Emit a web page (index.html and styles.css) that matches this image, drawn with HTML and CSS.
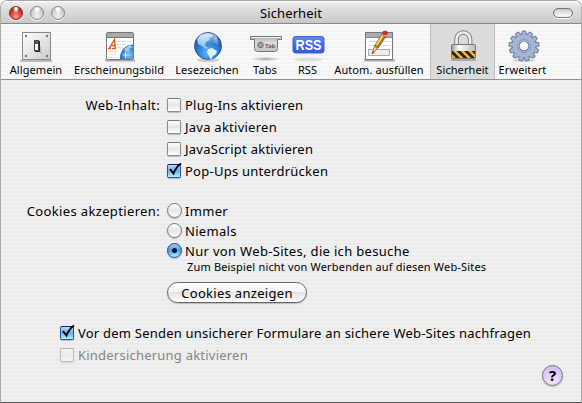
FILE: index.html
```
<!DOCTYPE html>
<html lang="de">
<head>
<meta charset="utf-8">
<title>Sicherheit</title>
<link rel="stylesheet" href="styles.css">
</head>
<body>
<div class="window">
  <header class="titlebar">
    <div class="lights"><i class="light red"></i><i class="light"></i><i class="light"></i></div>
    <h1>Sicherheit</h1>
    <i class="pill"></i>
  </header>
  <nav class="toolbar">
    <div class="item"><svg width="34" height="34" viewBox="0 0 34 34">
      <defs><linearGradient id="plate" x2="1" y2="1"><stop stop-color="#fff"/><stop offset="1" stop-color="#ccc"/></linearGradient></defs>
      <path d="M1 32h32" stroke="#bbb" stroke-width="2"/><rect x="3.500" y="3.500" width="28" height="27" fill="url(#plate)" stroke="#888"/>
      <g fill="#777"><circle cx="7" cy="7" r="1.200"/><circle cx="28" cy="7" r="1.200"/><circle cx="7" cy="27" r="1.200"/><circle cx="28" cy="27" r="1.200"/></g>
      <path d="M17 21l6 4-1-8z" fill="#bbb"/><rect x="15.500" y="11.500" width="4" height="10" fill="#fff" stroke="#444"/><path d="M16 12h3v3h-3z" fill="#555"/><path d="M16 22.500h4.500V12" stroke="#222" fill="none"/></svg><span>Allgemein</span></div>
    <div class="item wide"><svg width="34" height="34" viewBox="0 0 34 34">
      <defs><clipPath id="page"><path d="M5 9h26v21H5z"/></clipPath><radialGradient id="disc" cx=".35" cy=".4"><stop stop-color="#7fc6f5"/><stop offset=".6" stop-color="#3579c9"/><stop offset="1" stop-color="#164890"/></radialGradient></defs>
      <path d="M3 31.500h30" stroke="#aaa" stroke-width="2"/><rect x="4.500" y="3.500" width="27" height="27" rx="1.500" fill="#fff" stroke="#777"/><path d="M5 4h26v4H5z" fill="#aaa"/><path d="M5 8.500h26" stroke="#777"/>
      <path d="M15 12.500h14M15 15.500h11M15 18.500h6M7 22.500h8M7 25.500h7M7 28.500h7" stroke="#ddd" stroke-dasharray="4 1"/>
      <path d="M6 19.500h3M10 19.500h4M7.500 19l5-8.500.8 9M9 16.500h4" stroke="#e35a1c" stroke-width="1.400" fill="none"/>
      <g clip-path="url(#page)"><circle cx="31" cy="28.500" r="13" fill="url(#disc)"/><path d="M22 20l6-4 3 2-4 2 1 2-4 1z" fill="#a5c9f1"/><path d="M23.500 23v6M20.500 26h6" stroke="#eaffff" stroke-width=".8"/></g></svg><span>Erscheinungsbild</span></div>
    <div class="item"><svg width="34" height="34" viewBox="0 0 34 34">
      <defs><radialGradient id="globe" cx=".5" cy=".75" r=".7"><stop stop-color="#63bdf8"/><stop offset=".55" stop-color="#2b7bd5"/><stop offset="1" stop-color="#234d9f"/></radialGradient><linearGradient id="shine" x2="0" y2="1"><stop stop-color="#fff" stop-opacity=".65"/><stop offset="1" stop-color="#fff" stop-opacity="0"/></linearGradient></defs>
      <ellipse cx="18" cy="31" rx="11" ry="2" fill="#ccc"/><circle cx="18" cy="17" r="13.500" fill="url(#globe)" stroke="#244585" stroke-width=".8"/>
      <path d="M7 10l4-4 7-2 5 2-1 3-3-1 1 3-4 2-1 4 3 2-2 1-4-3-4-2z" fill="#98c7f1"/><path d="M18 20l4-1 5 3-1 3-3 2-2 4-2-4-2-4z" fill="#dcf3ff"/><path d="M25 7l4 5-1 4-3-2-2-4z" fill="#5792d5"/><ellipse cx="18" cy="10" rx="10" ry="6" fill="url(#shine)"/></svg><span>Lesezeichen</span></div>
    <div class="item"><svg width="34" height="34" viewBox="0 0 34 34">
      <defs><linearGradient id="tabg" x2="0" y2="1"><stop stop-color="#aaa"/><stop offset=".4" stop-color="#ddd"/><stop offset="1" stop-color="#c4c4c4"/></linearGradient><radialGradient id="tabshade"><stop stop-color="#aaa"/><stop offset="1" stop-color="#aaa" stop-opacity="0"/></radialGradient></defs>
      <ellipse cx="17.500" cy="30" rx="15" ry="2.500" fill="url(#tabshade)"/>
      <path d="M2.500 7.500h31v3h-4v9q0 3-3 3h-17q-3 0-3-3v-9h-4z" fill="url(#tabg)" stroke="#777"/><path d="M3 8.500h30" stroke="#eee"/><circle cx="12.500" cy="16" r="3.200" fill="#777"/><path d="M10.500 14l4 4m0-4l-4 4" stroke="#ccc"/><text x="17" y="18.500" class="tabtext">Tab</text></svg><span>Tabs</span></div>
    <div class="item"><svg width="34" height="34" viewBox="0 0 34 34">
      <defs><linearGradient id="rssg" x2="0" y2="1"><stop stop-color="#6a8cf5"/><stop offset=".5" stop-color="#4169ec"/><stop offset="1" stop-color="#315bdd"/></linearGradient></defs>
      <ellipse cx="17.500" cy="30.500" rx="14" ry="2" fill="#ddd"/><rect x="2" y="7.500" width="31" height="16.500" rx="2.500" fill="url(#rssg)" stroke="#3c5ed0"/><text x="17.500" y="21" text-anchor="middle" textLength="26" lengthAdjust="spacingAndGlyphs" class="rsstext">RSS</text></svg><span>RSS</span></div>
    <div class="item"><svg width="34" height="34" viewBox="0 0 34 34">
      <path d="M2 31.500h31" stroke="#aaa" stroke-width="2"/><rect x="3.500" y="3.500" width="27" height="27" fill="#fff" stroke="#777"/><path d="M4 4h26v4H4z" fill="#aaa"/><path d="M4 8.500h26" stroke="#888"/><path d="M7 12.500h9M7 16.500h7M20 12.500h8M20 16.500h8" stroke="#ddd"/><path d="M6.500 20.500h21v6h-21z" fill="#eee" stroke="#aaa"/>
      <path d="M10 25l3-9 7-11 4 2-7 11z" fill="#b77a29" stroke="#6b4820" stroke-width=".7"/><path d="M14.500 16l6.500-10" stroke="#ffd95d" stroke-width="2"/><path d="M19.500 5.500l4 2 1-2-4-2z" fill="#ddd" stroke="#777" stroke-width=".5"/><ellipse cx="23" cy="4" rx="2.800" ry="2.200" fill="#c82c20"/><path d="M10 25l2.600-7 2.400 1.500z" fill="#efcf9c"/><path d="M10 25l1-3 1 1z" fill="#222"/></svg><span>Autom. ausfüllen</span></div>
    <div class="item selected"><svg width="34" height="34" viewBox="0 0 34 34">
      <defs><linearGradient id="steel" x2="1"><stop stop-color="#999"/><stop offset=".3" stop-color="#fff"/><stop offset="1" stop-color="#bbb"/></linearGradient><clipPath id="stripes"><path d="M6 22h23v7H6z"/></clipPath></defs>
      <path d="M5 31h25" stroke="#aaa" stroke-width="2"/><path d="M10.500 16V10.500a6.800 7 0 0 1 13.600 0v6" fill="none" stroke="#777" stroke-width="4.500"/><path d="M10.500 16V10.500a6.800 7 0 0 1 13.600 0v6" fill="none" stroke="#eee" stroke-width="2.700"/>
      <rect x="5.500" y="15.500" width="24" height="14" rx="1" fill="url(#steel)" stroke="#777"/><path d="M6 22h23v7H6z" fill="#f7b82e"/><g clip-path="url(#stripes)"><path d="M3 20l11 11M10.500 20l11 11M18 20l11 11M25.500 20l11 11" stroke="#27221c" stroke-width="2.800"/></g></svg><span>Sicherheit</span></div>
    <div class="item"><svg width="34" height="34" viewBox="0 0 34 34">
      <defs><path id="tooth" d="M14.800 7L16.500 2h3l1.700 5z"/><g id="teeth"><use href="#tooth"/><use href="#tooth" transform="rotate(27.700 18 17)"/><use href="#tooth" transform="rotate(55.400 18 17)"/><use href="#tooth" transform="rotate(83.100 18 17)"/><use href="#tooth" transform="rotate(110.800 18 17)"/><use href="#tooth" transform="rotate(138.500 18 17)"/><use href="#tooth" transform="rotate(166.200 18 17)"/><use href="#tooth" transform="rotate(193.800 18 17)"/><use href="#tooth" transform="rotate(221.500 18 17)"/><use href="#tooth" transform="rotate(249.200 18 17)"/><use href="#tooth" transform="rotate(276.900 18 17)"/><use href="#tooth" transform="rotate(304.600 18 17)"/><use href="#tooth" transform="rotate(332.300 18 17)"/></g></defs>
      <ellipse cx="18" cy="31.500" rx="11" ry="1.500" fill="#ccc"/>
      <use href="#teeth" fill="#a5b6d3" stroke="#687a9e" stroke-width="1"/>
      <g fill="none"><circle cx="18" cy="17" r="7.800" stroke="#687a9e" stroke-width="6.800"/><circle cx="18" cy="17" r="8.200" stroke="#a5b7d3" stroke-width="6"/><circle cx="18" cy="17" r="6.700" stroke="#889bbd"/></g></svg><span>Erweitert</span></div>
  </nav>
  <main>
    <section class="group web">
      <div class="label">Web-Inhalt:</div>
      <div class="options">
        <label><i class="box"></i><span>Plug-Ins aktivieren</span></label>
        <label><i class="box"></i><span>Java aktivieren</span></label>
        <label><i class="box"></i><span>JavaScript aktivieren</span></label>
        <label><i class="box on"><svg width="16" height="16" viewBox="0 0 16 16"><path d="M3 7l3.500 4.500Q9 5 14 1.500" /></svg></i><span>Pop-Ups unterdrücken</span></label>
      </div>
    </section>
    <section class="group cookies">
      <div class="label">Cookies akzeptieren:</div>
      <div class="options">
        <label><i class="radio"></i><span>Immer</span></label>
        <label><i class="radio"></i><span>Niemals</span></label>
        <label><i class="radio on"></i><span>Nur von Web-Sites, die ich besuche</span></label>
        <p>Zum Beispiel nicht von Werbenden auf diesen Web-Sites</p>
        <button><span>Cookies anzeigen</span></button>
      </div>
    </section>
    <section class="extra">
      <label><i class="box on"><svg width="16" height="16" viewBox="0 0 16 16"><path d="M3 7l3.500 4.500Q9 5 14 1.500" /></svg></i><span class="ask">Vor dem Senden unsicherer Formulare an sichere Web-Sites nachfragen</span></label>
      <label class="disabled"><i class="box"></i><span>Kindersicherung aktivieren</span></label>
    </section>
    <div class="footer"><button class="help">?</button></div>
  </main>
</div>
</body>
</html>
```
FILE: styles.css
```
* { box-sizing: border-box; }
body { margin: 0; background: #fff; font: 13px/18px "Lucida Grande", "Noto Sans", sans-serif; color: #000; }
.window { width: 582px; height: 403px; border: 1px solid #aaa; border-bottom-color: #555; border-radius: 7px 7px 0 0; overflow: hidden; background: repeating-linear-gradient(#f0f0f0 0 2px, #ebebeb 2px 4px); }
.titlebar { height: 23px; display: grid; grid-template-columns: 70px 1fr 70px; align-items: center; padding: 0 8px; background: linear-gradient(#f1f1f1, #dedede 35%, #c8c8c8); border-bottom: 1px solid #888; box-shadow: inset 0 1px #fff; }
.titlebar h1 { margin: 2px 0 0; font-size: 13px; font-weight: 400; text-align: center; line-height: 18px; letter-spacing: .1px; }
.lights { display: flex; gap: 7px; padding-top: 2px; }
.light { width: 14px; height: 14px; border-radius: 50%; border: 1px solid #888; background: radial-gradient(ellipse at 50% 12%, #fff 0 15%, transparent 38%), radial-gradient(circle at 50% 75%, #f2f2f2, #b5b5b5); box-shadow: 0 1px #fff; }
.light.red { border-color: #852c27; background: radial-gradient(ellipse at 50% 12%, #fff 0 10%, transparent 35%), radial-gradient(circle at 50% 80%, #ff9c8c, #ce3c34 50%, #8e2722); }
.pill { justify-self: end; width: 20px; height: 10px; margin-top: 2px; border: 1px solid #777; border-radius: 5px; background: linear-gradient(#ccc, #fff); box-shadow: 0 1px #fff, inset 0 0 1px #777; }
.toolbar { height: 56px; display: grid; grid-template-columns: 62px 104px 72px 44px 41px 102px 65px 55px; padding-left: 4px; border-bottom: 1px solid #929292; background: repeating-linear-gradient(#f9f9f9 0 2px, #f4f4f4 2px 4px); }
.item { display: flex; flex-direction: column; align-items: center; padding-top: 5px; font-size: 11px; line-height: 14px; letter-spacing: .08px; white-space: nowrap; }
.item svg { display: block; letter-spacing: 0; }
.selected { background: #dcdcdc; border: solid #bcbcbc; border-width: 0 1px; }
.tabtext { font: bold 6px "Noto Sans", sans-serif; fill: #666; }
.rsstext { font: bold 14px "Liberation Sans", sans-serif; fill: #fff; }
main { padding: 15px 18px 0 26px; letter-spacing: .25px; }
.group { display: grid; grid-template-columns: 133px 1fr; column-gap: 7px; }
.label { display: flex; justify-content: flex-end; white-space: nowrap; line-height: 20px; letter-spacing: .35px; }
label { display: flex; align-items: center; height: 22px; gap: 4px; white-space: nowrap; }
.web { height: 88px; }
.web .options { margin-top: -1px; }
.cookies { margin-top: 18px; }
.cookies label { height: 20px; gap: 3px; letter-spacing: .32px; }
.box { flex: none; width: 14px; height: 14px; border: 1px solid #8b8b8b; border-top-color: #777; border-radius: 2px; background: linear-gradient(#fff, #e5e5e5 50%, #fff); box-shadow: 0 1px 1px #bbb; }
.box.on { border-color: #33518b; border-top-color: #171d77; background: linear-gradient(#b8daff, #62aef0 50%, #b5f2ff); }
.box svg { display: block; margin: -3px 0 0 -1px; overflow: visible; }
.box path { fill: none; stroke: #000; stroke-width: 2; }
.radio { flex: none; width: 15px; height: 15px; margin-top: -1px; border-radius: 50%; border: 1px solid #777; background: linear-gradient(#fff, #e6e6e6 50%, #fff); box-shadow: 0 1px 1px #bbb; }
.radio.on { border-color: #24458b; background: radial-gradient(circle, #001135 0 2px, transparent 3px), linear-gradient(#a1c8f4, #4e9de6 50%, #b0f3ff); }
p { margin: -2px 0 7px 20px; font-size: 11px; line-height: 16px; letter-spacing: .17px; white-space: nowrap; }
button { display: block; width: 140px; height: 21px; padding: 0; border: 1px solid #666; border-radius: 11px; background: linear-gradient(#fff, #f3f3f3 48%, #e3e3e3 50%, #fff); box-shadow: 0 1px 1px #bbb; font: inherit; line-height: 18px; letter-spacing: .3px; color: #000; }
.extra { margin: 19px 0 0 33px; letter-spacing: .22px; }
.disabled { color: #858585; }
.disabled .box { opacity: .5; }
.footer { display: flex; justify-content: flex-end; margin-top: -1px; }
.footer .help { width: 21px; height: 21px; border-color: #777; border-radius: 50%; background: radial-gradient(circle at 50% 80%, #f5e5ff, #cbb2f0); font-size: 15px; font-weight: 700; letter-spacing: 0; line-height: 17px; }
```
